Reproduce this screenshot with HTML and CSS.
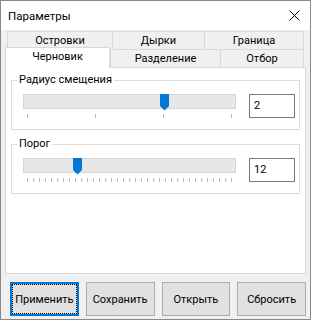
FILE: index.html
```html
<!DOCTYPE html>
<html lang="ru">
<head>
    <meta charset="UTF-8">
    <title>Параметры</title>
    <link rel="stylesheet" href="styles.css">
</head>
<body>
    <div class="window">
        <div class="titlebar">
            <span class="title">Параметры</span>
            <svg class="close" width="11" height="11" viewBox="0 0 11 11">
                <path d="M0.5 0.5 L10.5 10.5 M10.5 0.5 L0.5 10.5" stroke="#000" stroke-width="1" fill="none"/>
            </svg>
        </div>
        <div class="client">
            <div class="tabs">
                <div class="tab-row">
                    <div class="tab t-islands">Островки</div>
                    <div class="tab t-holes">Дырки</div>
                    <div class="tab t-border last">Граница</div>
                </div>
                <div class="tab-row">
                    <div class="tab tab-active">Черновик</div>
                    <div class="tab t-split">Разделение</div>
                    <div class="tab t-pick last">Отбор</div>
                </div>
            </div>
            <div class="panel">
                <div class="group">
                    <div class="group-title">Радиус смещения</div>
                    <div class="group-body">
                        <div class="slider">
                            <div class="track">
                                <svg class="thumb" style="left: 136px" width="9" height="17" viewBox="0 0 9 17">
                                    <path d="M0 0 H9 V12 L4.5 16.5 L0 12 Z" fill="#0078d7"/>
                                </svg>
                            </div>
                            <div class="ticks ticks-wide"></div>
                        </div>
                        <div class="edit">2</div>
                    </div>
                </div>
                <div class="group group-second">
                    <div class="group-title">Порог</div>
                    <div class="group-body">
                        <div class="slider">
                            <div class="track">
                                <svg class="thumb" style="left: 49px" width="9" height="17" viewBox="0 0 9 17">
                                    <path d="M0 0 H9 V12 L4.5 16.5 L0 12 Z" fill="#0078d7"/>
                                </svg>
                            </div>
                            <div class="ticks ticks-dense"></div>
                        </div>
                        <div class="edit">12</div>
                    </div>
                </div>
            </div>
            <div class="buttons">
                <button class="btn btn-default">Применить</button>
                <button class="btn">Сохранить</button>
                <button class="btn">Открыть</button>
                <button class="btn">Сбросить</button>
            </div>
        </div>
    </div>
</body>
</html>
```

FILE: styles.css
```css
body {
    margin: 0;
    font-family: Roboto, "Noto Sans", sans-serif;
    font-size: 11px;
    color: #000;
}
.window {
    width: 311px;
    height: 320px;
    box-sizing: border-box;
    border: 1px solid #888;
    background-color: #f0f0f0;
}
.titlebar {
    height: 29px;
    background-color: #fff;
    display: flex;
    align-items: center;
    justify-content: space-between;
    padding: 0 10px 0 7px;
}
.title {
    font-size: 11.5px;
}
.close {
    display: block;
}
.client {
    padding: 1px 4px 0 4px;
}
.tabs {
    margin: 0 2px;
}
.tab-row {
    display: flex;
    height: 18px;
}
.tab {
    box-sizing: border-box;
    height: 18px;
    border-left: 1px solid #d9d9d9;
    border-top: 1px solid #d9d9d9;
    text-align: center;
    line-height: 16px;
    padding-top: 1px;
    white-space: nowrap;
}
.tab.last {
    border-right: 1px solid #d9d9d9;
}
.t-islands { width: 105px; }
.t-holes { width: 92px; }
.t-border { width: 100px; }
.t-split { width: 110px; }
.t-pick { width: 84px; }
.tab-active {
    width: 105px;
    height: 21px;
    margin: -2px 0 -1px -2px;
    padding-top: 1px;
    line-height: 15px;
    background-color: #fff;
    border-right: 1px solid #d9d9d9;
    position: relative;
    z-index: 1;
}
.panel {
    box-sizing: border-box;
    height: 207px;
    background-color: #fff;
    border: 1px solid #d9d9d9;
    padding: 12px 5px 0 5px;
}
.group {
    border: 1px solid #dcdcdc;
    padding: 0 4px 11px 11px;
}
.group-second {
    margin-top: 14px;
}
.group-title {
    width: fit-content;
    margin: -9px 0 0 -6px;
    padding: 0 2px;
    line-height: 16px;
    background-color: #fff;
}
.group-body {
    display: flex;
    justify-content: space-between;
    align-items: flex-start;
    margin-top: 6px;
}
.slider {
    width: 213px;
}
.track {
    position: relative;
    box-sizing: border-box;
    height: 15px;
    background-color: #e7e7e7;
    border: 1px solid #d6d6d6;
}
.thumb {
    position: absolute;
    top: -1px;
    display: block;
}
.ticks {
    width: 205px;
    height: 4px;
    margin: 5px 0 0 4px;
}
.ticks-wide {
    background: repeating-linear-gradient(to right, #bdbdbd 0 1px, transparent 1px 68px);
}
.ticks-dense {
    background: repeating-linear-gradient(to right, #bdbdbd 0 1px, transparent 1px 6px);
}
.edit {
    box-sizing: border-box;
    width: 46px;
    height: 24px;
    border: 1px solid #7a7a7a;
    background-color: #fff;
    padding: 4px 0 0 4px;
    line-height: 13px;
}
.buttons {
    display: flex;
    gap: 7px;
    margin-top: 8px;
    padding-left: 5px;
}
.btn {
    box-sizing: border-box;
    width: 69px;
    height: 34px;
    padding: 0;
    font-family: inherit;
    font-size: 11px;
    color: #000;
    background-color: #e1e1e1;
    border: 1px solid #adadad;
}
.btn-default {
    border: 2px solid #0078d7;
    outline: 1px dotted #000;
    outline-offset: -3px;
}
```
